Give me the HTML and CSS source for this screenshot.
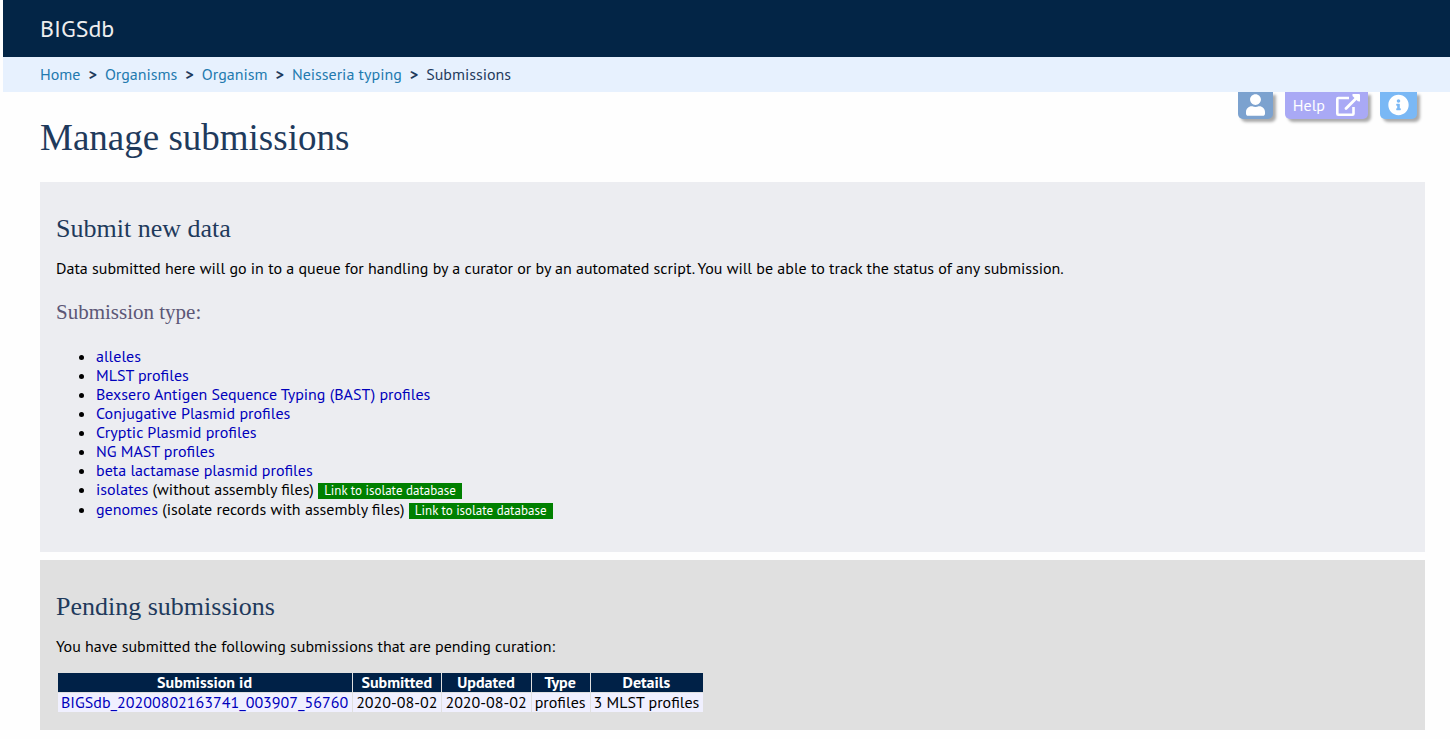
FILE: index.html
```html
<!DOCTYPE html>
<html lang="en">
  <head>
    <meta charset="utf-8" />
    <title>Manage submissions - BIGSdb</title>
    <meta name="viewport" content="width=device-width, initial-scale=1" />
    <link rel="stylesheet" href="styles.css">
  </head>
  <body>
    <header class="site-header">BIGSdb</header>
    <nav class="breadcrumbs" aria-label="Breadcrumb">
      <a href="#">Home</a>
      <span class="separator">&gt;</span>
      <a href="#">Organisms</a>
      <span class="separator">&gt;</span>
      <a href="#">Organism</a>
      <span class="separator">&gt;</span>
      <a href="#">Neisseria typing</a>
      <span class="separator">&gt;</span>
      <span>Submissions</span>
    </nav>
    <main class="main-content">
      <div class="title-row">
        <h1>Manage submissions</h1>
        <div class="tabs">
          <a class="tab tab-user" href="#" aria-label="User">
            <svg width="19" height="22" viewBox="0 0 448 512"><path fill="#fff" d="M224 256c70.700 0 128-57.300 128-128S294.700 0 224 0 96 57.300 96 128s57.300 128 128 128zm89.600 32h-16.700c-22.200 10.200-46.900 16-72.900 16s-50.600-5.800-72.900-16h-16.700C60.200 288 0 348.200 0 422.400V464c0 26.500 21.500 48 48 48h352c26.500 0 48-21.500 48-48v-41.600c0-74.200-60.200-134.400-134.400-134.400z"/></svg>
          </a>
          <a class="tab tab-help" href="#">
            Help
            <svg width="24" height="22" viewBox="0 0 24 22"><path fill="none" stroke="#fff" stroke-width="2.600" stroke-linejoin="round" d="M13 4H2.300a1 1 0 0 0-1 1v14.700a1 1 0 0 0 1 1H16.500a1 1 0 0 0 1-1V13"/><path fill="none" stroke="#fff" stroke-width="2.800" stroke-linecap="round" d="M10 14.500L20.500 4"/><path fill="#fff" d="M16.500 0h6.500a1 1 0 0 1 1 1v6.500L21.800 7.300 16.500 2z"/></svg>
          </a>
          <button class="tab tab-info" type="button" aria-label="Information">
            <svg width="21" height="22" viewBox="0 0 512 512"><path fill="#fff" d="M256 8C119 8 8 119.100 8 256c0 137 111 248 248 248s248-111 248-248C504 119.100 393 8 256 8zm0 110c23.200 0 42 18.800 42 42s-18.800 42-42 42-42-18.800-42-42 18.800-42 42-42zm56 254c0 6.600-5.400 12-12 12h-88c-6.600 0-12-5.400-12-12v-24c0-6.600 5.400-12 12-12h12v-64h-12c-6.600 0-12-5.400-12-12v-24c0-6.600 5.400-12 12-12h64c6.600 0 12 5.400 12 12v100h12c6.600 0 12 5.400 12 12v24z"/></svg>
          </button>
        </div>
      </div>
      <section class="box box-submit">
        <h2>Submit new data</h2>
        <p>Data submitted here will go in to a queue for handling by a curator or by an automated script. You will be able to track the status of any submission.</p>
        <h3>Submission type:</h3>
        <ul class="submission-types">
          <li><a href="#">alleles</a></li>
          <li><a href="#">MLST profiles</a></li>
          <li><a href="#">Bexsero Antigen Sequence Typing (BAST) profiles</a></li>
          <li><a href="#">Conjugative Plasmid profiles</a></li>
          <li><a href="#">Cryptic Plasmid profiles</a></li>
          <li><a href="#">NG MAST profiles</a></li>
          <li><a href="#">beta lactamase plasmid profiles</a></li>
          <li><a href="#">isolates</a> (without assembly files) <a class="db-link" href="#">Link to isolate database</a></li>
          <li><a href="#">genomes</a> (isolate records with assembly files) <a class="db-link" href="#">Link to isolate database</a></li>
        </ul>
      </section>
      <section class="box box-pending">
        <h2>Pending submissions</h2>
        <p>You have submitted the following submissions that are pending curation:</p>
        <table class="results">
          <thead>
            <tr><th>Submission id</th><th>Submitted</th><th>Updated</th><th>Type</th><th>Details</th></tr>
          </thead>
          <tbody>
            <tr>
              <td><a href="#">BIGSdb_20200802163741_003907_56760</a></td>
              <td>2020-08-02</td>
              <td>2020-08-02</td>
              <td>profiles</td>
              <td>3 MLST profiles</td>
            </tr>
          </tbody>
        </table>
      </section>
    </main>
  </body>
</html>
```
FILE: styles.css
```css
*{
  box-sizing:border-box;
}
body{
  font-family: "PT Sans", "Noto Sans", sans-serif;
  font-size:16px;
  line-height:19px;
  color:#000;
  background-color:#fefefe;
  margin:0 0 0 3px;
}
a{
  color:#00b;
  text-decoration:none;
}
h1, h2, h3{
  font-family: "Liberation Serif", serif;
  font-weight:normal;
  color:#1f3a5c;
  margin:0;
}
h1{
  font-size:37px;
  line-height:42px;
  padding-top:25px;
}
h2{
  font-size:26px;
  line-height:29px;
}
h3{
  font-size:21px;
  line-height:24px;
  color:#5c5776;
}
p{
  margin:16px 0;
}
.site-header{
  padding:15px 37px 14px;
  font-size:24px;
  line-height:28px;
  color:#eee;
  background-color:#032546;
}
.breadcrumbs{
  display:flex;
  flex-wrap:wrap;
  gap:8px;
  padding:8px 37px;
  color:#1f3a5c;
  background-color:#e7f1fe;
}
.breadcrumbs a{
  color:#237aaf;
}
.breadcrumbs .separator{
  font-weight:bold;
}
.main-content{
  padding:0 25px 8px 37px;
}
.title-row{
  display:flex;
  justify-content:space-between;
  align-items:flex-start;
  min-height:90px;
}
.tabs{
  display:flex;
  gap:12px;
  padding-right:8px;
}
.tab{
  display:flex;
  align-items:center;
  gap:11px;
  height:27px;
  padding:0 8px;
  border:0;
  border-radius:0 0 5px 5px;
  color:#fff;
  box-shadow:3px 3px 3px #aaa;
}
.tab svg{
  margin-bottom:2px;
}
.tab-user{
  background-color:#7ca2cf;
}
.tab-help{
  background-color:#a9a9f5;
}
.tab-info{
  background-color:#7ab8f5;
}
.box{
  padding:32px 16px 16px;
  margin-bottom:8px;
}
.box:last-child{
  margin-bottom:0;
}
.box-submit{
  padding-bottom:32px;
  background-color:#ecedf1;
}
.box-submit h3{
  margin-top:22px;
}
.box-pending{
  background-color:#e0e0e0;
}
.submission-types{
  margin:23px 0 0;
  padding-left:40px;
}
.db-link{
  display:inline-block;
  margin-bottom:1px;
  padding:0 6px;
  font-size:13px;
  line-height:16px;
  color:#fff;
  background-color:green;
}
.results{
  margin:2px 1px 1px;
  border-spacing:1px;
}
.results th, .results td{
  padding:0 4px 0 3px;
}
.results th{
  color:#fff;
  background-color:#002147;
}
.results td{
  background-color:#f0f0ff;
}
```
